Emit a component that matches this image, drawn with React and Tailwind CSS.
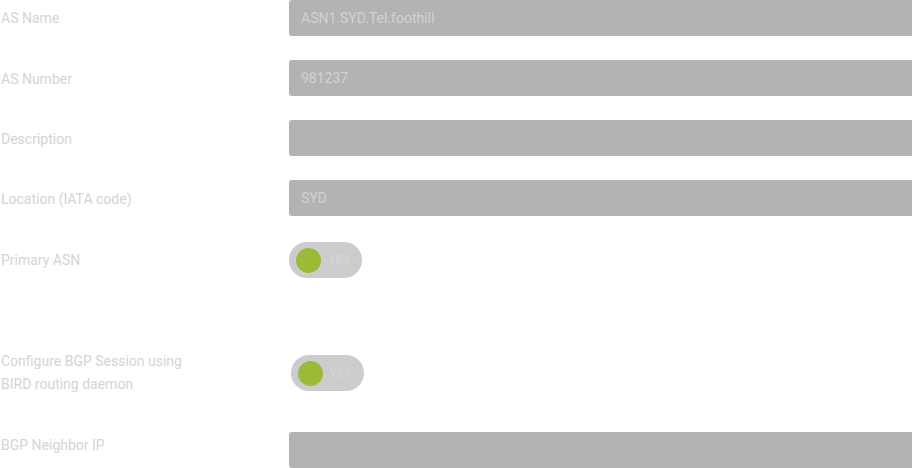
import React from "react";

const font = { fontFamily: "Roboto, 'Noto Sans', sans-serif" };

function Field({ label, value, className = "", labelClass = "" }) {
  return (
    <div className={"flex items-center h-9 " + className}>
      <div className={"w-[289px] pl-px text-[14px] text-[#d4d4d4] " + labelClass}>{label}</div>
      <div className="flex-1 h-9 bg-[#b3b3b3] rounded-[3px] flex items-center pl-3 text-[14px] text-[#d2d2d2] mr-[-8px]">
        {value}
      </div>
    </div>
  );
}

function Toggle({ className = "" }) {
  return (
    <div className={"w-[73px] h-9 rounded-full bg-[#cccccc] flex items-center pl-[7px] gap-[7px] " + className}>
      <div className="w-[25px] h-[25px] rounded-full bg-[#9aba38]" />
      <span className="text-[12px] font-bold text-[#d4d4d4]">YES</span>
    </div>
  );
}

export default function App() {
  return (
    <div className="w-[912px] h-[468px] bg-white overflow-hidden flex flex-col" style={font}>
      <Field label="AS Name" value="ASN1.SYD.Tel.foothill" labelClass="pt-px" />
      <Field label="AS Number" value="981237" className="mt-6" labelClass="pt-[2px]" />
      <Field label="Description" value="" className="mt-6" labelClass="pt-[2px]" />
      <Field label="Location (IATA code)" value="SYD" className="mt-6" labelClass="pt-[2px]" />
      <div className="flex items-center h-9 mt-[26px]">
        <div className="w-[289px] pl-px text-[14px] text-[#d4d4d4]">Primary ASN</div>
        <Toggle />
      </div>
      <div className="flex items-center h-[46px] mt-[72px]">
        <div className="w-[289px] pl-px text-[14px] leading-[23px] text-[#d4d4d4]">
          Configure BGP Session using
          <br />
          BIRD routing daemon
        </div>
        <Toggle className="ml-[2px]" />
      </div>
      <Field label="BGP Neighbor IP" value="" className="mt-9" labelClass="pb-[9px]" />
    </div>
  );
}
